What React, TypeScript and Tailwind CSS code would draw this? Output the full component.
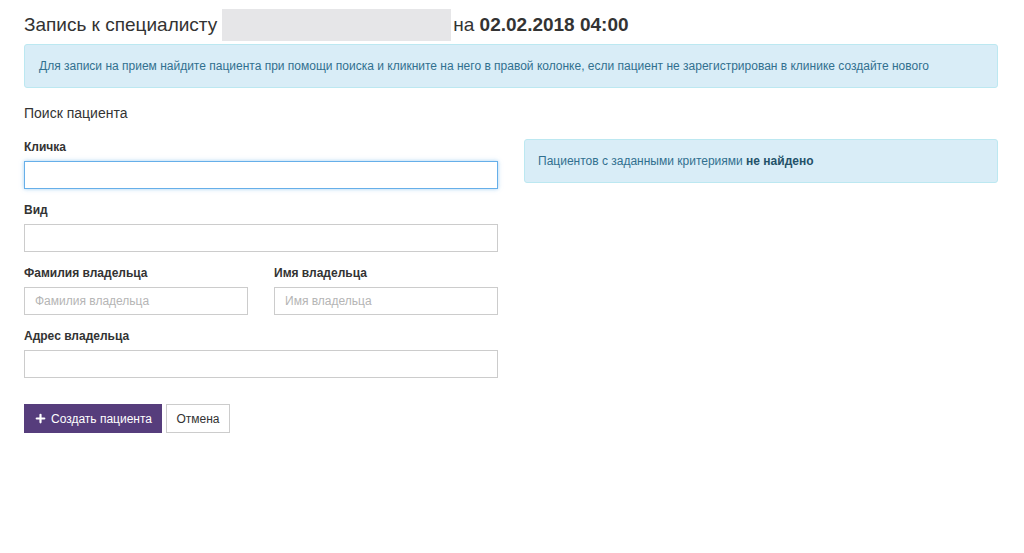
import { Plus } from 'lucide-react';

function Field({ label, placeholder, focused }: { label: string; placeholder?: string; focused?: boolean }) {
  return (
    <div className="flex flex-col">
      <label className="text-[12px] font-bold text-[#333] leading-[17px] mb-[5px]">{label}</label>
      <input
        placeholder={placeholder}
        className={
          focused
            ? 'h-[28px] w-full border border-[#66afe9] shadow-[0_0_4px_rgba(102,175,233,0.6)] outline-none px-[10px] text-[12px] placeholder:text-[#b5b5b5]'
            : 'h-[28px] w-full border border-[#ccc] outline-none px-[10px] text-[12px] placeholder:text-[#b5b5b5]'
        }
      />
    </div>
  );
}

export default function App() {
  return (
    <div className="min-h-[553px] bg-white pl-[24px] pr-[26px] pt-[9px] text-[#333] font-['Liberation_Sans',Arial,sans-serif]">
      <h1 className="flex items-center text-[19px] leading-[32px] h-[32px]">
        <span>Запись к специалисту</span>
        <span className="inline-block w-[229px] h-[32px] ml-[5px] mr-[2px] bg-[#e6e6e8]" />
        <span>на <b>02.02.2018 04:00</b></span>
      </h1>

      <div className="mt-[3px] h-[44px] flex items-center px-[14px] bg-[#d9edf7] border border-[#bce8f1] rounded-[3px] text-[#31708f] text-[12px]">
        Для записи на прием найдите пациента при помощи поиска и кликните на него в правой колонке, если пациент не зарегистрирован в клинике создайте нового
      </div>

      <h2 className="mt-[15px] text-[14px] leading-[20px]">Поиск пациента</h2>

      <div className="grid grid-cols-2 gap-[26px] mt-[16px]">
        <div className="flex flex-col">
          <div className="flex flex-col gap-[13px]">
            <Field label="Кличка" focused />
            <Field label="Вид" />
            <div className="grid grid-cols-2 gap-[26px]">
              <Field label="Фамилия владельца" placeholder="Фамилия владельца" />
              <Field label="Имя владельца" placeholder="Имя владельца" />
            </div>
            <Field label="Адрес владельца" />
          </div>
          <div className="flex gap-[4px] mt-[26px]">
            <button className="h-[29px] w-[138px] flex items-center justify-center gap-[4px] bg-[#563d7c] text-white text-[12px]">
              <Plus size={13} strokeWidth={4} />
              Создать пациента
            </button>
            <button className="h-[29px] w-[64px] border border-[#ccc] bg-white text-[#333] text-[12px]">Отмена</button>
          </div>
        </div>
        <div>
          <div className="h-[44px] flex items-center px-[13px] bg-[#d9edf7] border border-[#bce8f1] rounded-[3px] text-[#31708f] text-[12px]">
            <span>
              Пациентов с заданными критериями <b className="text-[#245269]">не найдено</b>
            </span>
          </div>
        </div>
      </div>
    </div>
  );
}
